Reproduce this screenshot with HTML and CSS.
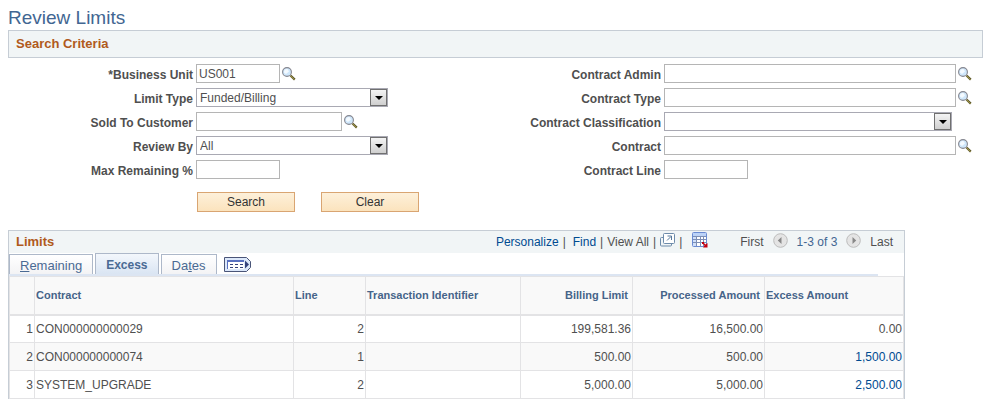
FILE: index.html
```html
<!DOCTYPE html>
<html lang="en">
<head>
  <meta charset="UTF-8">
  <title>Review Limits</title>
  <link rel="stylesheet" href="styles.css">
</head>
<body>
  <!-- shared icons -->
  <svg class="sprite" aria-hidden="true">
    <symbol id="lookup" viewBox="0 0 14 14">
      <path d="M8.5 8.5L12.8 12.6" stroke="#5d572a" stroke-width="2.2"/>
      <path d="M8.6 8.8L12.4 12.6" stroke="#a89f4c" stroke-width="1"/>
      <circle cx="5" cy="5" r="4.4" fill="#cfe7fb" stroke="#85868f" stroke-width="1.1"/>
      <path d="M2 5.400A3 3 0 0 1 5.400 2L7 4.500L4 7z" fill="#f4faff"/>
    </symbol>
  </svg>

  <h1>Review Limits</h1>
  <h2 class="section">Search Criteria</h2>

  <form>
    <div class="criteria">
      <div class="column">
        <div class="field">
          <label for="unit">*Business Unit</label>
          <input type="text" id="unit" class="short" value="US001">
          <button type="button" class="lookup" aria-label="Look up Business Unit"><svg><use href="#lookup"/></svg></button>
        </div>
        <div class="field">
          <label for="limitType">Limit Type</label>
          <span class="select medium"><select id="limitType"><option>Funded/Billing</option></select></span>
        </div>
        <div class="field">
          <label for="customer">Sold To Customer</label>
          <input type="text" id="customer" class="customer">
          <button type="button" class="lookup" aria-label="Look up Sold To Customer"><svg><use href="#lookup"/></svg></button>
        </div>
        <div class="field">
          <label for="reviewBy">Review By</label>
          <span class="select medium"><select id="reviewBy"><option>All</option></select></span>
        </div>
        <div class="field">
          <label for="remaining">Max Remaining %</label>
          <input type="text" id="remaining" class="short">
        </div>
      </div>
      <div class="column">
        <div class="field">
          <label for="admin">Contract Admin</label>
          <input type="text" id="admin" class="wide">
          <button type="button" class="lookup" aria-label="Look up Contract Admin"><svg><use href="#lookup"/></svg></button>
        </div>
        <div class="field">
          <label for="contractType">Contract Type</label>
          <input type="text" id="contractType" class="wide">
          <button type="button" class="lookup" aria-label="Look up Contract Type"><svg><use href="#lookup"/></svg></button>
        </div>
        <div class="field">
          <label for="classification">Contract Classification</label>
          <span class="select wide"><select id="classification"><option></option></select></span>
        </div>
        <div class="field">
          <label for="contract">Contract</label>
          <input type="text" id="contract" class="wide">
          <button type="button" class="lookup" aria-label="Look up Contract"><svg><use href="#lookup"/></svg></button>
        </div>
        <div class="field">
          <label for="line">Contract Line</label>
          <input type="text" id="line" class="short">
        </div>
      </div>
    </div>
    <div class="actions">
      <button type="button" class="action">Search</button>
      <button type="button" class="action">Clear</button>
    </div>
  </form>

  <div class="limits">
    <div class="grid-header">
      <h2>Limits</h2>
      <div class="tools">
        <a href="#">Personalize</a><span>|</span>
        <a href="#" class="find">Find</a><span>|</span>
        <span>View All</span><span>|</span>
        <a href="#" aria-label="Zoom grid">
          <svg class="popup" width="15" height="14" viewBox="0 0 15 14">
            <path d="M3.5 4.5H1.5Q.5 4.500.5 5.500V12Q.5 13 1.500 13H10.500Q11.500 13 11.500 12V10.500" fill="none" stroke="#6d8baa"/>
            <rect x="3.500" y=".5" width="11" height="10" rx="1" fill="#fff" stroke="#6d8baa"/>
            <path d="M7 7.500L11 3.500M7.500 3H11.500V7" fill="none" stroke="#56789b"/>
          </svg>
        </a><span>|</span>
        <a href="#" class="download" aria-label="Download grid">
          <svg width="16" height="16" viewBox="0 0 16 16">
            <rect x=".5" y=".5" width="14" height="14" rx="1" fill="#fff" stroke="#6a8bd2"/>
            <path d="M1 1H14V4H1z" fill="#bcd3f7"/>
            <path d="M1 4H4V14H1z" fill="#d0e0fa"/>
            <path d="M1 4.500H14M1 7.500H14M1 10.500H14M4.500 4V14M8.500 4V14M11.500 4V14" stroke="#7d8fb5"/>
            <path d="M10 10H12V11L13.500 12.500L15.500 11V15.500H11L12.500 13.500L11 12H10z" fill="#c40010"/>
          </svg>
        </a>
      </div>
      <div class="pager">
        <span>First</span>
        <button type="button" class="arrow" aria-label="Previous" disabled>
          <svg viewBox="0 0 15 15"><circle cx="7.500" cy="7.500" r="6.800" fill="#e4e4e4" stroke="#bcbcbc"/><path d="M8.500 4V11L4.800 7.500z" fill="#888"/></svg>
        </button>
        <span class="range">1-3 of 3</span>
        <button type="button" class="arrow" aria-label="Next" disabled>
          <svg viewBox="0 0 15 15"><circle cx="7.500" cy="7.500" r="6.800" fill="#e4e4e4" stroke="#bcbcbc"/><path d="M6.500 4V11L10.200 7.500z" fill="#888"/></svg>
        </button>
        <span>Last</span>
      </div>
    </div>

    <div class="tabs">
      <button type="button" class="tab"><u>R</u>emaining</button>
      <button type="button" class="tab active">Excess</button>
      <button type="button" class="tab">Da<u>t</u>es</button>
      <button type="button" class="show-all" aria-label="Show all columns">
        <svg width="27" height="15" viewBox="0 0 27 15">
          <path d="M.5.500H22.500L26.500 4.500V10.500L22.500 14.500H.5z" fill="#dce8fa" stroke="#4a5578"/>
          <path d="M4 3H20V12H4z" fill="#fff"/>
          <path d="M3 4H20" stroke="#5870c0" stroke-width="2"/>
          <path d="M3.500 3V12" stroke="#5870c0"/>
          <path d="M6 7.500H19M6 10.500H19" stroke="#34437c" stroke-dasharray="3 2"/>
          <path d="M21 3.500V11.500L25 7.500z" fill="#34437c"/>
        </svg>
      </button>
    </div>

    <table>
      <colgroup>
        <col class="col-row"><col><col class="col-line"><col class="col-transaction"><col class="col-billing"><col class="col-processed"><col class="col-excess">
      </colgroup>
      <thead>
        <tr>
          <th></th>
          <th>Contract</th>
          <th>Line</th>
          <th>Transaction Identifier</th>
          <th class="amount">Billing Limit</th>
          <th class="amount">Processed Amount</th>
          <th>Excess Amount</th>
        </tr>
      </thead>
      <tbody>
        <tr><td class="num">1</td><td>CON000000000029</td><td class="num">2</td><td></td><td class="num">199,581.36</td><td class="num">16,500.00</td><td class="num">0.00</td></tr>
        <tr><td class="num">2</td><td>CON000000000074</td><td class="num">1</td><td></td><td class="num">500.00</td><td class="num">500.00</td><td class="num"><a href="#">1,500.00</a></td></tr>
        <tr><td class="num">3</td><td>SYSTEM_UPGRADE</td><td class="num">2</td><td></td><td class="num">5,000.00</td><td class="num">5,000.00</td><td class="num"><a href="#">2,500.00</a></td></tr>
      </tbody>
    </table>
  </div>
</body>
</html>
```

FILE: styles.css
```css
*, *::before, *::after { box-sizing: border-box; }
body { margin: 6px 9px 0 8px; font: 12px/16px "Liberation Sans", Arial, sans-serif; color: #4f4f4f; background: #fff; }
h1, h2 { margin: 0; }
h1 { font-size: 19px; line-height: 24px; font-weight: normal; color: #426692; }
h2 { font-size: 13px; line-height: 16px; color: #b05a1c; }
a { color: #004b91; text-decoration: none; }
button, input, select { font: inherit; color: inherit; }
button { padding: 0; border: 0; background: none; }
svg { display: block; }
.sprite { position: absolute; width: 0; height: 0; }

.section { padding: 5px 7px; border: 1px solid #c6cdd5; background: #f1f5f6; }

/* search form */
.criteria { display: grid; grid-template-columns: 468px 1fr; padding-top: 6px; }
.column { display: grid; gap: 5px; align-content: start; }
.field { display: flex; height: 19px; padding-right: 11px; }
.field label { width: 185px; margin-right: 3px; padding-top: 3px; font-weight: bold; text-align: right; white-space: nowrap; }
.field input { height: 19px; padding: 0 2px; border: 1px solid #b5b5b5; }
.field .short { width: 84px; }
.field .medium { width: 192px; }
.field .customer { width: 146px; }
.field .wide { flex: 1; min-width: 0; }
.lookup { width: 14px; height: 14px; margin: 3px 0 0 2px; }
.lookup svg { width: 14px; height: 14px; }

.select { position: relative; }
.select.wide { margin-right: 20px; }
.select select { display: block; width: 100%; height: 19px; padding: 0 20px 0 3px; border: 1px solid #a9a9b3; border-radius: 0; background: #fff; appearance: none; }
.select::before { content: ""; position: absolute; top: 1px; right: 1px; width: 17px; height: 17px; border: 1px solid #707070; background: linear-gradient(#f4f4f4, #cfcfcf); pointer-events: none; }
.select::after { content: ""; position: absolute; top: 8px; right: 5px; border: 4px solid transparent; border-top-color: #000; border-bottom: 0; pointer-events: none; }

.actions { display: flex; gap: 26px; margin: 13px 0 18px 189px; }
.action { width: 98px; height: 20px; border: 1px solid #d9a572; background: linear-gradient(#fdf0da, #fbe3bd); color: #333; }

/* results grid */
.limits { width: 92%; border: 1px solid #c6cdd5; border-bottom: 0; }
.grid-header { display: flex; align-items: center; height: 22px; padding: 0 11px 0 7px; background: #f1f5f6; }
.tools, .pager { display: flex; align-items: center; white-space: nowrap; }
.tools { gap: 4px; margin-left: auto; }
.tools .find { margin-left: 3px; }
.tools .popup { margin-bottom: 4px; }
.tools .download { margin: 0 0 4px 6px; }
.pager { gap: 9px; margin-left: 32px; }
.range { color: #426692; }
.arrow, .arrow svg { width: 15px; height: 15px; }
.arrow { margin-bottom: 4px; }

.tabs { display: flex; align-items: flex-end; gap: 2px; height: 23px; margin-right: 26px; border-bottom: 2px solid #dce5f2; }
.tab { height: 20px; padding: 2px 10px 0; border: 1px solid #adb8c9; border-bottom: 0; background: linear-gradient(#fff, #f3f3f5); color: #4a6a94; font-size: 13px; line-height: 16px; }
.tab.active { height: 21px; background: linear-gradient(#f3f7fc, #dae5f3); font-size: 12px; font-weight: bold; }
.show-all { margin: 0 0 2px 5px; }

table { width: 100%; table-layout: fixed; border-collapse: collapse; }
.col-row { width: 25px; }
.col-line { width: 72px; }
.col-transaction { width: 155px; }
.col-billing { width: 112px; }
.col-processed { width: 132px; }
.col-excess { width: 139px; }
th, td { height: 28px; padding: 0 1px; border: 1px solid #e3e3e5; }
th { height: 38px; border-bottom-width: 2px; background: #f9f9f9; color: #466489; font-size: 11px; text-align: left; }
tbody tr:nth-child(even) { background: #f9f9f9; }
.num { text-align: right; }
.amount { padding-right: 4px; text-align: right; }
```
